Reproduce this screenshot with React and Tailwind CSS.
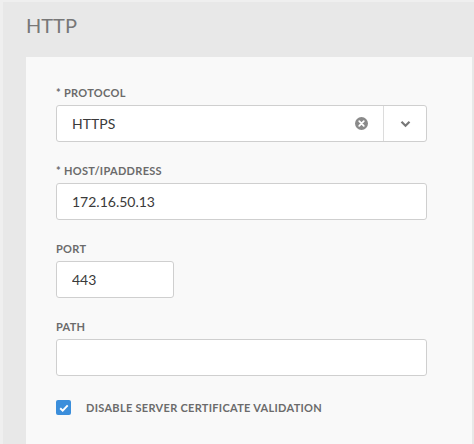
const Label = ({ children }) => (
  <div className="mb-[5px] h-[14px] text-[11px] font-bold leading-[14px] tracking-[0.3px] text-[#6b6b6b]">
    {children}
  </div>
);

const TextField = ({ value, className = "w-[371px]" }) => (
  <input
    className={`${className} h-[37px] rounded-[3px] border border-[#cfcfcf] bg-white px-[15px] text-[14px] text-[#3a3a3a] outline-none`}
    type="text"
    defaultValue={value}
  />
);

export default function App() {
  return (
    <div className="flex h-[444px] w-[474px] flex-col overflow-hidden border-l-[3px] border-t-[2px] border-[#efefef] bg-[#e8e8e8] font-['Lato','Liberation_Sans',sans-serif]">
      <div className="pl-[23px] pt-[11px] text-[20px] leading-[24px] text-[#777]">HTTP</div>

      <div className="flex flex-1 pl-[23px] pr-[2px] pt-[20px]">
        <div className="flex-1 bg-[#f9f9f9] pl-[30px] pt-[29px]">
          {/* protocol */}
          <Label>* PROTOCOL</Label>
          <div className="flex h-[37px] w-[371px] rounded-[3px] border border-[#cfcfcf] bg-white">
            <div className="flex flex-1 items-center pl-[15px] text-[14px] text-[#3a3a3a]">HTTPS</div>
            <div className="flex w-[44px] items-center justify-center">
              <svg width="13" height="13" viewBox="0 0 16 16">
                <circle cx="8" cy="8" r="8" fill="#8a8a8a" />
                <path d="M5.2 5.2l5.6 5.6M10.8 5.2l-5.6 5.6" stroke="#fff" strokeWidth="2.2" strokeLinecap="round" />
              </svg>
            </div>
            <div className="flex w-[43px] items-center justify-center border-l border-[#dcdcdc]">
              <svg width="11" height="8" viewBox="0 0 11 8">
                <path d="M1.5 1.8l4 4 4-4" fill="none" stroke="#777" strokeWidth="2.2" />
              </svg>
            </div>
          </div>

          <div className="mt-[22px]">
            <Label>* HOST/IPADDRESS</Label>
            <TextField value="172.16.50.13" />
          </div>

          <div className="mt-[22px]">
            <Label>PORT</Label>
            <TextField value="443" className="w-[118px]" />
          </div>

          <div className="mt-[22px]">
            <Label>PATH</Label>
            <TextField value="" />
          </div>

          <div className="mt-[24px] flex items-center gap-[15px]">
            <span className="flex h-[15px] w-[15px] items-center justify-center rounded-[2px] bg-[#3b8edb]">
              <svg width="10" height="8" viewBox="0 0 10 8">
                <path d="M1.2 4.2l2.5 2.4 5-5.2" fill="none" stroke="#fff" strokeWidth="1.9" />
              </svg>
            </span>
            <span className="text-[11px] font-bold leading-[14px] tracking-[0.3px] text-[#6b6b6b]">
              DISABLE SERVER CERTIFICATE VALIDATION
            </span>
          </div>
        </div>
      </div>
    </div>
  );
}
